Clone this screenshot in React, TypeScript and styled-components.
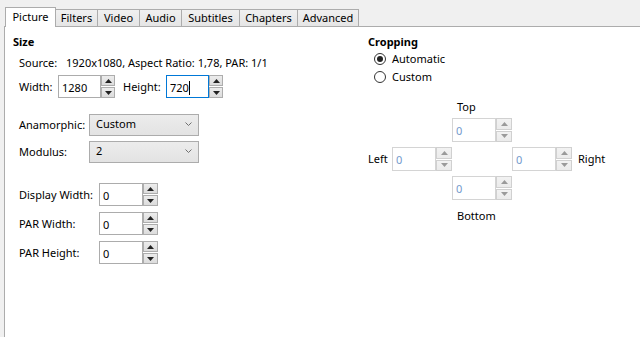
import React from 'react';
import styled, { createGlobalStyle } from 'styled-components';

const Global = createGlobalStyle`
  html, body { margin: 0; padding: 0; background: #f0f0f0; }
  body { font-family: "Noto Sans", "Segoe UI", sans-serif; font-size: 11px; color: #000; }
  #root { width: 640px; height: 337px; overflow: hidden; }
`;

const Window = styled.div`
  width: 640px;
  height: 337px;
  display: flex;
  flex-direction: column;
  background: #f0f0f0;
  overflow: hidden;
`;

const TabStrip = styled.div`
  display: flex;
  align-items: flex-end;
  height: 26px;
  padding-left: 5px;
  position: relative;
  z-index: 2;
`;

const Tab = styled.div<{ $w: number; $active?: boolean }>`
  box-sizing: border-box;
  width: ${(p) => p.$w}px;
  height: ${(p) => (p.$active ? 20 : 17)}px;
  margin-bottom: ${(p) => (p.$active ? -1 : 0)}px;
  margin-left: -1px;
  &:first-child { margin-left: 0; }
  border: 1px solid #acacac;
  border-bottom: none;
  background: ${(p) => (p.$active ? '#ffffff' : 'linear-gradient(#f0f0f0, #e5e5e5)')};
  position: relative;
  z-index: ${(p) => (p.$active ? 2 : 1)};
  display: flex;
  justify-content: center;
  align-items: ${(p) => (p.$active ? 'flex-start' : 'center')};
  padding-top: ${(p) => (p.$active ? 1 : 0)}px;
  line-height: 16px;
`;

const Panel = styled.div`
  flex: 1;
  margin-left: 4px;
  background: #fff;
  border-top: 1px solid #acacac;
  border-left: 1px solid #acacac;
  padding: 7px 0 0 8px;
  display: flex;
`;

const LeftColumn = styled.div`
  width: 355px;
  display: flex;
  flex-direction: column;
`;

const RightColumn = styled.div`
  display: flex;
  flex-direction: column;
`;

const SectionTitle = styled.div`
  font-weight: 700;
  line-height: 16px;
  height: 16px;
`;

const Row = styled.div<{ $mt: number; $h?: number }>`
  display: flex;
  align-items: center;
  margin-top: ${(p) => p.$mt}px;
  height: ${(p) => p.$h ?? 16}px;
  padding-left: 6px;
  line-height: 16px;
  white-space: nowrap;
`;

const Label = styled.span<{ $w?: number; $ml?: number }>`
  display: inline-block;
  width: ${(p) => (p.$w ? `${p.$w}px` : 'auto')};
  margin-left: ${(p) => p.$ml ?? 0}px;
  flex: none;
`;

const SpinWrap = styled.div`
  display: flex;
  flex: none;
`;

const TextBox = styled.div<{ $w: number; $h: number; $focused?: boolean; $disabled?: boolean }>`
  box-sizing: border-box;
  width: ${(p) => p.$w}px;
  height: ${(p) => p.$h}px;
  border: 1px solid ${(p) => (p.$focused ? '#0078d7' : p.$disabled ? '#d4d4d4' : '#acacac')};
  background: #fff;
  color: ${(p) => (p.$disabled ? '#7399cc' : '#000')};
  padding: 2px 0 0 3px;
  display: flex;
  align-items: center;
  line-height: 16px;
`;

const Caret = styled.span`
  display: inline-block;
  width: 1px;
  height: 14px;
  background: #000;
`;

const SpinButtons = styled.div<{ $w: number; $h: number }>`
  width: ${(p) => p.$w}px;
  height: ${(p) => p.$h}px;
  display: flex;
  flex-direction: column;
  gap: 1px;
`;

const SpinButton = styled.div<{ $disabled?: boolean }>`
  box-sizing: border-box;
  flex: 1;
  border: 1px solid ${(p) => (p.$disabled ? '#d0d0d0' : '#adadad')};
  background: ${(p) => (p.$disabled ? 'linear-gradient(#f2f2f2, #ebebeb)' : 'linear-gradient(#ececec, #dcdcdc)')};
  display: flex;
  align-items: center;
  justify-content: center;
`;

const Arrow = ({ up, disabled }: { up?: boolean; disabled?: boolean }) => (
  <svg width="7" height="4" viewBox="0 0 7 4">
    <polygon points={up ? '0,4 7,4 3.5,0' : '0,0 7,0 3.5,4'} fill={disabled ? '#9a9a9a' : '#222'} />
  </svg>
);

const SpinBox = ({
  value,
  w = 44,
  bw = 15,
  h = 23,
  focused,
  disabled,
}: {
  value: string;
  w?: number;
  bw?: number;
  h?: number;
  focused?: boolean;
  disabled?: boolean;
}) => (
  <SpinWrap>
    <TextBox $w={w} $h={h} $focused={focused} $disabled={disabled}>
      {value}
      {focused && <Caret />}
    </TextBox>
    <SpinButtons $w={bw} $h={h}>
      <SpinButton $disabled={disabled}>
        <Arrow up disabled={disabled} />
      </SpinButton>
      <SpinButton $disabled={disabled}>
        <Arrow disabled={disabled} />
      </SpinButton>
    </SpinButtons>
  </SpinWrap>
);

const SelectBox = styled.div`
  box-sizing: border-box;
  width: 110px;
  height: 22px;
  border: 1px solid #acacac;
  background: linear-gradient(#ececec, #e3e3e3);
  display: flex;
  align-items: center;
  justify-content: space-between;
  padding: 0 6px 3px 6px;
  line-height: 16px;
`;

const Chevron = () => (
  <svg width="7" height="4" viewBox="0 0 7 4">
    <polyline points="0.5,0.5 3.5,3.5 6.5,0.5" fill="none" stroke="#707070" strokeWidth="1" />
  </svg>
);

const RadioRow = styled.div`
  display: flex;
  align-items: center;
  height: 18px;
  padding-left: 6px;
  gap: 6px;
  line-height: 16px;
`;

const RadioCircle = styled.span<{ $checked?: boolean }>`
  box-sizing: border-box;
  width: 12px;
  height: 12px;
  border-radius: 50%;
  border: 1px solid #333;
  background: #fff;
  display: flex;
  align-items: center;
  justify-content: center;
  &::after {
    content: '';
    display: ${(p) => (p.$checked ? 'block' : 'none')};
    width: 6px;
    height: 6px;
    border-radius: 50%;
    background: #222;
  }
`;

const CropGrid = styled.div`
  margin-top: 13px;
  display: grid;
  grid-template-columns: 24px 60px 60px 60px auto;
  grid-template-rows: 19px 29px 29px 32px 16px;
  line-height: 16px;
`;

const GridCell = styled.div<{ $col: number; $row: number; $align?: string; $pl?: number; $mt?: number }>`
  grid-column: ${(p) => p.$col};
  grid-row: ${(p) => p.$row};
  align-self: ${(p) => p.$align ?? 'start'};
  padding-left: ${(p) => p.$pl ?? 0}px;
  margin-top: ${(p) => p.$mt ?? 0}px;
  white-space: nowrap;
`;

const tabs = [
  { name: 'Picture', w: 51 },
  { name: 'Filters', w: 43 },
  { name: 'Video', w: 43 },
  { name: 'Audio', w: 43 },
  { name: 'Subtitles', w: 59 },
  { name: 'Chapters', w: 59 },
  { name: 'Advanced', w: 62 },
];

export default function App() {
  return (
    <>
      <Global />
      <Window>
        <TabStrip>
          {tabs.map((t, i) => (
            <Tab key={t.name} $w={t.w} $active={i === 0}>
              {t.name}
            </Tab>
          ))}
        </TabStrip>
        <Panel>
          <LeftColumn>
            <SectionTitle>Size</SectionTitle>
            <Row $mt={5}>
              <Label $w={47}>Source:</Label>
              <span>1920x1080, Aspect Ratio: 1,78, PAR: 1/1</span>
            </Row>
            <Row $mt={4} $h={23}>
              <Label $w={39}>Width:</Label>
              <SpinBox value="1280" w={43} bw={14} />
              <Label $w={43} $ml={8}>Height:</Label>
              <SpinBox value="720" w={43} bw={14} focused />
            </Row>
            <Row $mt={16} $h={22}>
              <Label $w={70}>Anamorphic:</Label>
              <SelectBox>
                <span>Custom</span>
                <Chevron />
              </SelectBox>
            </Row>
            <Row $mt={5} $h={22}>
              <Label $w={70}>Modulus:</Label>
              <SelectBox>
                <span>2</span>
                <Chevron />
              </SelectBox>
            </Row>
            <Row $mt={20} $h={23}>
              <Label $w={80}>Display Width:</Label>
              <SpinBox value="0" />
            </Row>
            <Row $mt={6} $h={23}>
              <Label $w={80}>PAR Width:</Label>
              <SpinBox value="0" />
            </Row>
            <Row $mt={6} $h={23}>
              <Label $w={80}>PAR Height:</Label>
              <SpinBox value="0" />
            </Row>
          </LeftColumn>
          <RightColumn>
            <SectionTitle>Cropping</SectionTitle>
            <RadioRow>
              <RadioCircle $checked />
              <span>Automatic</span>
            </RadioRow>
            <RadioRow>
              <RadioCircle />
              <span>Custom</span>
            </RadioRow>
            <CropGrid>
              <GridCell $col={3} $row={1} $pl={5}>Top</GridCell>
              <GridCell $col={3} $row={2}>
                <SpinBox value="0" w={44} bw={16} h={24} disabled />
              </GridCell>
              <GridCell $col={1} $row={3} $align="center" $mt={-5}>Left</GridCell>
              <GridCell $col={2} $row={3}>
                <SpinBox value="0" w={44} bw={16} h={24} disabled />
              </GridCell>
              <GridCell $col={4} $row={3}>
                <SpinBox value="0" w={44} bw={16} h={24} disabled />
              </GridCell>
              <GridCell $col={5} $row={3} $align="center" $pl={6} $mt={-5}>Right</GridCell>
              <GridCell $col={3} $row={4}>
                <SpinBox value="0" w={44} bw={16} h={24} disabled />
              </GridCell>
              <GridCell $col={3} $row={5} $pl={5}>Bottom</GridCell>
            </CropGrid>
          </RightColumn>
        </Panel>
      </Window>
    </>
  );
}
